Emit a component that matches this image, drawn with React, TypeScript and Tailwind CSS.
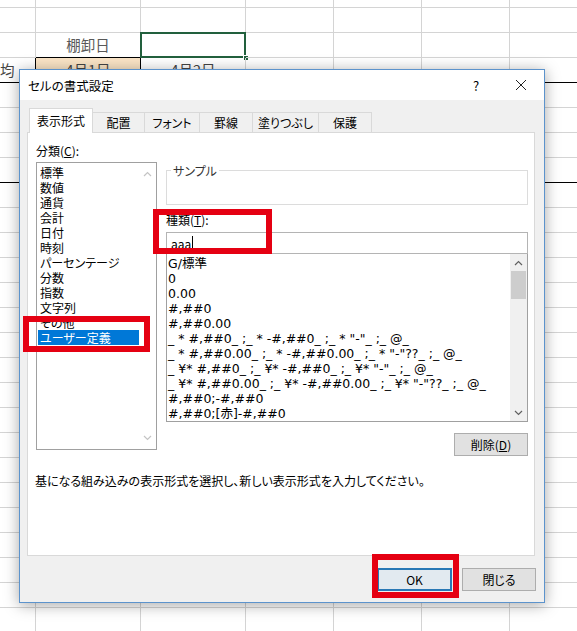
import React from 'react'

const colW = ['w-[36px]', 'w-[105px]', 'w-[105px]', 'w-[88px]', 'w-[88px]', 'w-[88px]', 'w-[88px]']
const rowCount = 26

const categories = [
  '標準',
  '数値',
  '通貨',
  '会計',
  '日付',
  '時刻',
  'パーセンテージ',
  '分数',
  '指数',
  '文字列',
  'その他',
  'ユーザー定義',
]

const formats = [
  'G/標準',
  '0',
  '0.00',
  '#,##0',
  '#,##0.00',
  '_ * #,##0_ ;_ * -#,##0_ ;_ * "-"_ ;_ @_',
  '_ * #,##0.00_ ;_ * -#,##0.00_ ;_ * "-"??_ ;_ @_',
  '_ ¥* #,##0_ ;_ ¥* -#,##0_ ;_ ¥* "-"_ ;_ @_',
  '_ ¥* #,##0.00_ ;_ ¥* -#,##0.00_ ;_ ¥* "-"??_ ;_ @_',
  '#,##0;-#,##0',
  '#,##0;[赤]-#,##0',
]

const tabs = [
  { label: '配置', w: 'w-[52px]' },
  { label: 'フォント', w: 'w-[55px]' },
  { label: '罫線', w: 'w-[53px]' },
  { label: '塗りつぶし', w: 'w-[66px]' },
  { label: '保護', w: 'w-[53px]' },
]

function cellClass(r: number, c: number) {
  let cls = 'relative shrink-0 border-r border-b '
  if (r === 3 || r === 7) cls += 'border-b-black '
  else if (r === 2 && c === 1) cls += 'border-b-black '
  else cls += 'border-b-[#d4d4d4] '
  if (r === 3 && (c === 0 || c === 1)) cls += 'border-r-black '
  else cls += 'border-r-[#d4d4d4] '
  if (r === 3 && c === 1) cls += 'bg-[#fae4c6] '
  return cls
}

function Sheet() {
  return (
    <div className="flex flex-col text-[14.5px] text-[#444]">
      {Array.from({ length: rowCount }).map((_, r) => (
        <div key={r} className={r === 0 ? 'flex h-[8px]' : 'flex h-[25px]'}>
          {colW.map((w, c) => (
            <div key={c} className={cellClass(r, c) + w}>
              {r === 2 && c === 1 && (
                <div className="flex h-full items-center justify-center text-[#595959]">棚卸日</div>
              )}
              {r === 2 && c === 2 && (
                <>
                  <div className="absolute -left-px -top-px h-[26px] w-[106px] border-2 border-[#22603d]" />
                  <div className="absolute -bottom-[4px] -right-[4px] h-[6px] w-[6px] border border-white bg-[#22603d]" />
                </>
              )}
              {r === 3 && c === 0 && <div className="flex h-full items-center leading-none">均</div>}
              {r === 3 && c === 1 && (
                <div className="flex h-full items-center justify-center">4月1日</div>
              )}
              {r === 3 && c === 2 && (
                <div className="flex h-full items-center justify-center">4月2日</div>
              )}
            </div>
          ))}
        </div>
      ))}
    </div>
  )
}

function Chevron({ up, color }: { up?: boolean; color: string }) {
  return (
    <svg width="9" height="6" viewBox="0 0 9 6">
      <path
        d={up ? 'M1 5 L4.5 1.5 L8 5' : 'M1 1 L4.5 4.5 L8 1'}
        fill="none"
        stroke={color}
        strokeWidth="1.2"
      />
    </svg>
  )
}

function Btn({ children, primary }: { children: React.ReactNode; primary?: boolean }) {
  return (
    <div
      className={
        primary
          ? 'flex h-[23px] w-[75px] items-center justify-center border-2 border-[#2878b5] bg-[#e2eaf0]'
          : 'flex h-[23px] w-[74px] items-center justify-center border border-[#adadad] bg-[#e1e1e1]'
      }
    >
      {children}
    </div>
  )
}

function Dialog() {
  return (
    <div className="absolute left-[19px] top-[69px] flex h-[534px] w-[526px] flex-col border border-[#5c93cc] bg-[#f0f0f0] text-[12px] leading-[15px] text-black shadow-[0_2px_14px_rgba(0,0,0,0.35)]">
      {/* title bar */}
      <div className="flex h-[30px] shrink-0 items-center bg-white pl-[8px] pr-[8px]">
        <span className="text-[12.5px]">セルの書式設定</span>
        <div className="ml-auto flex w-[30px] justify-center text-[13px]">?</div>
        <div className="ml-[15px] flex w-[30px] justify-center">
          <svg width="12" height="12" viewBox="0 0 12 12">
            <path d="M1 1 L11 11 M11 1 L1 11" stroke="#222" strokeWidth="1" />
          </svg>
        </div>
      </div>

      <div className="flex flex-col pl-[7px] pt-[8px]">
        {/* tabs */}
        <div className="flex h-[24px] items-end">
          <div className="relative z-10 -mb-px ml-[2px] flex h-[25px] w-[64px] items-center justify-center border border-b-0 border-[#d9d9d9] bg-white pb-[2px]">
            表示形式
          </div>
          {tabs.map((t) => (
            <div
              key={t.label}
              className={
                'flex h-[20px] items-center justify-center border border-b-0 border-l-0 border-[#d9d9d9] bg-[#f0f0f0] ' +
                t.w
              }
            >
              {t.label}
            </div>
          ))}
        </div>

        {/* panel */}
        <div className="flex h-[424px] w-[508px] flex-col border border-[#d9d9d9] bg-white pl-[7px]">
          <div className="flex">
            {/* category column */}
            <div className="ml-[1px] flex w-[121px] flex-col pt-[10px]">
              <div>
                分類(<span className="underline">C</span>):
              </div>
              <div className="mt-[4px] flex h-[288px] border border-[#a0a0a0]">
                <div className="flex flex-1 flex-col pl-[1px] pt-[1.5px]">
                  {categories.map((c, i) => (
                    <div
                      key={c}
                      className={
                        i === categories.length - 1
                          ? 'h-[15px] bg-[#0078d7] pl-[2px] text-white'
                          : 'h-[15px] pl-[2px]'
                      }
                    >
                      {c}
                    </div>
                  ))}
                </div>
                <div className="flex w-[17px] flex-col items-center justify-between py-[8px]">
                  <Chevron up color="#c4c4c4" />
                  <Chevron color="#c4c4c4" />
                </div>
              </div>
            </div>

            {/* type column */}
            <div className="ml-[9px] flex w-[362px] flex-col pt-[30px]">
              <fieldset className="h-[42px] border border-[#dcdcdc] px-[4px]">
                <legend className="px-[2px] text-[#333]">サンプル</legend>
              </fieldset>
              <div className="mt-[7px]">
                種類(<span className="underline">T</span>):
              </div>
              <div className="mt-[5px] flex h-[22px] items-center border border-[#b4b4b4] pl-[4px]">
                <span>aaa</span>
                <span className="ml-px h-[14px] w-px bg-black" />
              </div>
              <div className="flex h-[168px] border border-t-0 border-[#a0a0a0]">
                <div className="flex flex-1 flex-col pl-[1px] pt-[1.5px] font-['DejaVu_Sans','Noto_Sans_CJK_JP',sans-serif] text-[12.5px] leading-[15px]">
                  {formats.map((f) => (
                    <div key={f} className="h-[15px] whitespace-pre">
                      {f}
                    </div>
                  ))}
                </div>
                <div className="flex w-[17px] flex-col bg-[#f0f0f0]">
                  <div className="flex h-[17px] items-center justify-center">
                    <Chevron up color="#606060" />
                  </div>
                  <div className="mx-[1px] h-[28px] bg-[#cdcdcd]" />
                  <div className="flex-1" />
                  <div className="flex h-[17px] items-center justify-center">
                    <Chevron color="#606060" />
                  </div>
                </div>
              </div>
              <div className="mt-[11px] self-end">
                <Btn>
                  削除(<span className="underline">D</span>)
                </Btn>
              </div>
            </div>
          </div>
          <div className="mt-[17px]">
            基になる組み込みの表示形式を選択し、新しい表示形式を入力してください。
          </div>
        </div>
      </div>

      {/* footer */}
      <div className="flex flex-1 items-start justify-end gap-[10px] pr-[8px] pt-[12px]">
        <Btn primary>OK</Btn>
        <Btn>閉じる</Btn>
      </div>
    </div>
  )
}

export default function App() {
  return (
    <div className="relative h-[631px] w-[577px] overflow-hidden bg-white font-['Noto_Sans_CJK_JP','Noto_Sans',sans-serif] [font-feature-settings:'palt']">
      <Sheet />
      <Dialog />
      {/* red annotation boxes */}
      <div className="absolute left-[23px] top-[316px] h-[36px] w-[127px] border-[6px] border-[#e50012]" />
      <div className="absolute left-[153px] top-[209px] h-[45px] w-[119px] border-[6px] border-[#e50012]" />
      <div className="absolute left-[372px] top-[554px] h-[44px] w-[87px] border-[6px] border-[#e50012]" />
    </div>
  )
}
